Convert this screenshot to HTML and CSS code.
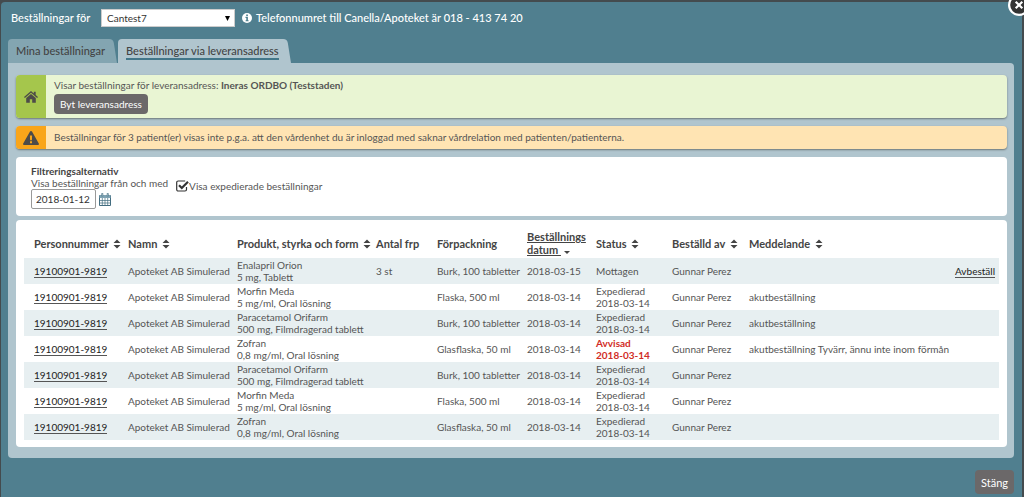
FILE: index.html
```html
<!DOCTYPE html>
<html lang="sv">
<head>
<meta charset="utf-8">
<meta name="viewport" content="width=device-width, initial-scale=1">
<title>Beställningar</title>
<link rel="stylesheet" href="styles.css">
</head>
<body>
<svg class="sprite" aria-hidden="true">
  <symbol id="sort" viewBox="0 0 8 10"><path d="M4 0.5 7.5 4h-7zM4 9.5.5 6h7z"/></symbol>
</svg>
<main class="dialog">
  <button class="close" type="button" aria-label="Stäng dialog">
    <svg viewBox="0 0 20 20"><circle cx="10" cy="10" r="9" fill="#333" stroke="#fff" stroke-width="2"/><path d="m7 7 6 6m0-6-6 6" stroke="#fff" stroke-width="2"/></svg>
  </button>
  <header class="topbar">
    <label for="orderer">Beställningar för</label>
    <select id="orderer" class="orderer"><option>Cantest7</option></select>
    <svg class="info" viewBox="0 0 10 10" aria-hidden="true"><circle cx="5" cy="5" r="5" fill="#fff"/><path d="M4.2 1.4h1.7V3H4.2zM3.5 3.8h2.4v3.4h.7v1.1h-3V7.2h.7V4.9h-.8z" fill="#4d7f8f"/></svg>
    <span>Telefonnumret till Canella/Apoteket är 018 - 413 74 20</span>
  </header>
  <nav class="tabs">
    <a class="tab" href="#mina"><span>Mina beställningar</span></a>
    <a class="tab active" href="#adress" aria-current="page"><span>Beställningar via leveransadress</span></a>
  </nav>
  <div class="panel">
    <section class="notice address">
      <div class="notice-icon">
        <svg class="home" viewBox="0 0 14 12"><path d="M7 0 0 6l.9 1L7 1.8 13.1 7l.9-1-2.3-2V.8H9.8v1.6zM7 2.9 2.2 7v4.7h3.6V8.2h2.4v3.5h3.6V7z"/></svg>
      </div>
      <div class="notice-body">
        <p>Visar beställningar för leveransadress: <strong>Ineras ORDBO (Teststaden)</strong></p>
        <button class="change" type="button">Byt leveransadress</button>
      </div>
    </section>
    <section class="notice warning">
      <div class="notice-icon">
        <svg class="alert" viewBox="0 0 16 14"><path fill-rule="evenodd" d="M8 0c.5 0 .8.2 1 .6l6.8 12c.4.7 0 1.4-.8 1.4H1c-.8 0-1.200-.7-.8-1.400L7 .6c.2-.4.5-.6 1-.6zM6.900 4.500l.2 4.800h1.800l.2-4.800zM7 10.300v1.900h2v-1.900z"/></svg>
      </div>
      <div class="notice-body"><p>Beställningar för 3 patient(er) visas inte p.g.a. att den vårdenhet du är inloggad med saknar vårdrelation med patienten/patienterna.</p></div>
    </section>
    <section class="card filters">
      <div>
        <h2>Filtreringsalternativ</h2>
        <label for="from">Visa beställningar från och med</label>
        <div class="date-row">
          <input id="from" class="date" type="text" value="2018-01-12">
          <button class="calendar" type="button" aria-label="Välj datum">
            <svg viewBox="0 0 12 13"><path d="M.5 2.500h11v10H.5z" fill="#fff" stroke="#426d80"/><path d="M.5 2h11v3H.5z" fill="#7fa3b3"/><path d="M3.300 5v7.500M6 5v7.500M8.700 5v7.500M.5 7.500h11M.5 10h11" stroke="#426d80" stroke-width=".7"/><path d="M3.300.3v3M8.700.3v3" stroke="#426d80" stroke-width="1.800"/><path d="M3.300.8v2M8.700.8v2" stroke="#dce8ec" stroke-width=".6"/></svg>
          </button>
        </div>
      </div>
      <label class="check"><input type="checkbox" checked><svg viewBox="0 0 13 12" aria-hidden="true"><path d="M10.500 7v2.500c0 .8-.6 1.500-1.500 1.500H2.200C1.300 11 .7 10.300.7 9.500v-7C.7 1.600 1.300 1 2.200 1h7" fill="none" stroke="#333" stroke-width="1.200"/><path d="m3 5.200 2.800 2.800L12 1.800" fill="none" stroke="#333" stroke-width="2.200"/></svg><span>Visa expedierade beställningar</span></label>
    </section>
    <section class="card orders">
      <table>
        <colgroup><col class="c-id"><col class="c-name"><col class="c-product"><col class="c-count"><col class="c-pack"><col class="c-date"><col class="c-status"><col class="c-by"><col><col class="c-action"></colgroup>
        <thead><tr>
          <th>Personnummer <svg class="sort"><use href="#sort"/></svg></th>
          <th>Namn <svg class="sort"><use href="#sort"/></svg></th>
          <th>Produkt, styrka och form <svg class="sort"><use href="#sort"/></svg></th>
          <th>Antal frp</th>
          <th>Förpackning</th>
          <th class="sorted"><span>Beställnings<br>datum&nbsp;</span> <svg class="down" viewBox="0 0 6 3"><path d="M0 0h6L3 3z"/></svg></th>
          <th>Status <svg class="sort"><use href="#sort"/></svg></th>
          <th>Beställd av <svg class="sort"><use href="#sort"/></svg></th>
          <th>Meddelande <svg class="sort"><use href="#sort"/></svg></th>
          <th></th>
        </tr></thead>
        <tbody>
          <tr><td><a href="#p1">19100901-9819</a></td><td>Apoteket AB Simulerad</td><td>Enalapril Orion<br>5 mg, Tablett</td><td>3 st</td><td>Burk, 100 tabletter</td><td>2018-03-15</td><td>Mottagen</td><td>Gunnar Perez</td><td></td><td><a href="#avbestall">Avbeställ</a></td></tr>
          <tr><td><a href="#p2">19100901-9819</a></td><td>Apoteket AB Simulerad</td><td>Morfin Meda<br>5 mg/ml, Oral lösning</td><td></td><td>Flaska, 500 ml</td><td>2018-03-14</td><td>Expedierad<br>2018-03-14</td><td>Gunnar Perez</td><td>akutbeställning</td><td></td></tr>
          <tr><td><a href="#p3">19100901-9819</a></td><td>Apoteket AB Simulerad</td><td>Paracetamol Orifarm<br>500 mg, Filmdragerad tablett</td><td></td><td>Burk, 100 tabletter</td><td>2018-03-14</td><td>Expedierad<br>2018-03-14</td><td>Gunnar Perez</td><td>akutbeställning</td><td></td></tr>
          <tr><td><a href="#p4">19100901-9819</a></td><td>Apoteket AB Simulerad</td><td>Zofran<br>0,8 mg/ml, Oral lösning</td><td></td><td>Glasflaska, 50 ml</td><td>2018-03-14</td><td class="rejected">Avvisad<br>2018-03-14</td><td>Gunnar Perez</td><td>akutbeställning Tyvärr, ännu inte inom förmån</td><td></td></tr>
          <tr><td><a href="#p5">19100901-9819</a></td><td>Apoteket AB Simulerad</td><td>Paracetamol Orifarm<br>500 mg, Filmdragerad tablett</td><td></td><td>Burk, 100 tabletter</td><td>2018-03-14</td><td>Expedierad<br>2018-03-14</td><td>Gunnar Perez</td><td></td><td></td></tr>
          <tr><td><a href="#p6">19100901-9819</a></td><td>Apoteket AB Simulerad</td><td>Morfin Meda<br>5 mg/ml, Oral lösning</td><td></td><td>Flaska, 500 ml</td><td>2018-03-14</td><td>Expedierad<br>2018-03-14</td><td>Gunnar Perez</td><td></td><td></td></tr>
          <tr><td><a href="#p7">19100901-9819</a></td><td>Apoteket AB Simulerad</td><td>Zofran<br>0,8 mg/ml, Oral lösning</td><td></td><td>Glasflaska, 50 ml</td><td>2018-03-14</td><td>Expedierad<br>2018-03-14</td><td>Gunnar Perez</td><td></td><td></td></tr>
        </tbody>
      </table>
    </section>
  </div>
  <footer class="actions"><button class="dismiss" type="button">Stäng</button></footer>
</main>
</body>
</html>
```
FILE: styles.css
```css
* { box-sizing: border-box; }
body {
  margin: 0;
  padding: 2px 2px 0 1px;
  min-height: 100vh;
  display: flex;
  background: #444b4e;
  font: 10px/12px Lato, "Liberation Sans", sans-serif;
  color: #555;
  overflow-x: hidden;
}
h2, p { margin: 0; }
h2 { font-size: 10px; line-height: 12px; color: #444; }
button, input, select { font-family: inherit; margin: 0; }
svg { flex: none; }
.sprite { position: absolute; width: 0; height: 0; }
.dialog {
  position: relative;
  flex: 1;
  min-width: 0;
  padding: 6px 8px 0 7px;
  background: #507f8f;
  border-radius: 4px 4px 0 0;
}
.close {
  position: absolute;
  top: -8px;
  right: -8px;
  width: 22px;
  height: 22px;
  padding: 0;
  border: 0;
  background: none;
}
.close svg { display: block; width: 22px; height: 22px; }
.topbar {
  display: flex;
  align-items: center;
  height: 20px;
  padding-left: 3px;
  font-size: 11px;
  font-weight: 500;
  color: #fff;
}
.topbar label { min-width: 83px; }
.orderer {
  appearance: none;
  width: 134px;
  height: 18px;
  margin: 0 7px;
  padding: 0 5px;
  border: 1px solid #ccc;
  border-radius: 0;
  font-size: 10px;
  color: #333;
  background: #fff url("data:image/svg+xml,%3Csvg xmlns='http://www.w3.org/2000/svg' viewBox='0 0 5 5'%3E%3Cpath d='M0 0h5L2.500 5z'/%3E%3C/svg%3E") no-repeat right 4px center / 5px 5px;
}
.info { width: 10px; height: 10px; margin-right: 4px; }
.tabs { display: flex; gap: 1px; margin-top: 11px; }
.tab {
  position: relative;
  height: 24px;
  padding: 5px 12px 0 8px;
  font-size: 11px;
  font-weight: 500;
  line-height: 14px;
  color: #444;
  text-decoration: none;
}
.tab::before, .tab::after {
  content: "";
  position: absolute;
  inset: 0;
  background: #83a5b1;
  border-radius: 4px 4px 0 0;
}
.tab::before {
  transform: skewX(9deg);
  transform-origin: bottom;
}
.tab::before { left: 8px; }
.tab::after { right: 50%; border-radius: 4px 0 0; }
.tab span { position: relative; z-index: 1; display: block; }
.tab.active::before, .tab.active::after { background: #b0c5ce; }
.tab.active span { border-bottom: 2px solid #427689; }
.panel {
  display: grid;
  padding: 12px 7px 11px 8px;
  background: #b0c5ce;
  border-radius: 0 4px 4px 4px;
}
.notice {
  display: flex;
  margin-bottom: 8px;
  border-radius: 4px;
  box-shadow: 0 1px 2px #6d7778;
  overflow: hidden;
}
.notice-icon {
  display: flex;
  align-items: center;
  justify-content: center;
  flex: 0 0 30px;
  fill: #4d4b49;
}
.notice-body { padding: 4px 8px; }
.address { background: #e9f5d3; }
.address .notice-icon { background: #a5c64c; }
.warning { background: #ffe4b3; }
.warning .notice-icon { background: #f9a51a; }
.warning .notice-body { padding: 5px 8px 6px; }
.home { width: 14px; height: 12px; }
.alert { width: 16px; height: 14px; }
.change, .dismiss {
  border: 0;
  border-radius: 4px;
  background: #6b6869;
  color: #fff;
}
.change {
  display: block;
  height: 20px;
  margin-top: 3px;
  padding: 0 6px;
  font-size: 10px;
}
.card { background: #fff; border-radius: 4px; }
.filters {
  display: flex;
  gap: 8px;
  margin-bottom: 4px;
  padding: 8px 15px 7px;
}
.filters label { display: block; }
.date-row { display: flex; align-items: center; gap: 3px; }
.date {
  width: 65px;
  height: 20px;
  padding: 0 4px;
  border: 1px solid #999;
  border-radius: 2px;
  font-size: 10px;
  color: #333;
}
.calendar { padding: 0; border: 0; background: none; }
.calendar svg { display: block; width: 12px; height: 13px; }
.filters .check {
  position: relative;
  display: flex;
  align-items: center;
  align-self: flex-start;
  margin-top: 15px;
}
.check input {
  position: absolute;
  inset: 0;
  width: 13px;
  height: 12px;
  opacity: 0;
}
.check svg { width: 13px; height: 12px; }
.orders { padding: 8px 8px 7px; }
table {
  width: 100%;
  table-layout: fixed;
  border-collapse: collapse;
}
th, td {
  height: 26px;
  padding: 0 0 0 4px;
  text-align: left;
  white-space: nowrap;
}
th {
  height: 30px;
  font-size: 11px;
  line-height: 13px;
  color: #444;
}
th:first-child, td:first-child { padding-left: 10px; }
td:last-child { padding-right: 4px; text-align: right; }
tbody tr:nth-child(odd) { background: #e7eff1; }
td a {
  color: #222;
  text-decoration: none;
  border-bottom: 1px solid #555;
}
.c-id { width: 100px; }
.c-name { width: 109px; }
.c-product { width: 139px; }
.c-count { width: 61px; }
.c-pack { width: 90px; }
.c-date { width: 69px; }
.c-status { width: 76px; }
.c-by { width: 77px; }
.c-action { width: 48px; }
.sort { width: 8px; height: 10px; margin-left: 2px; vertical-align: -1px; fill: #444; }
.sorted span { text-decoration: underline; }
.down { width: 6px; height: 3px; fill: #444; }
.rejected { color: #d12d26; font-weight: bold; }
.actions { display: flex; justify-content: flex-end; padding: 12px 0 4px; }
.dismiss {
  height: 24px;
  padding: 0 6px;
  font-size: 11px;
}
```
